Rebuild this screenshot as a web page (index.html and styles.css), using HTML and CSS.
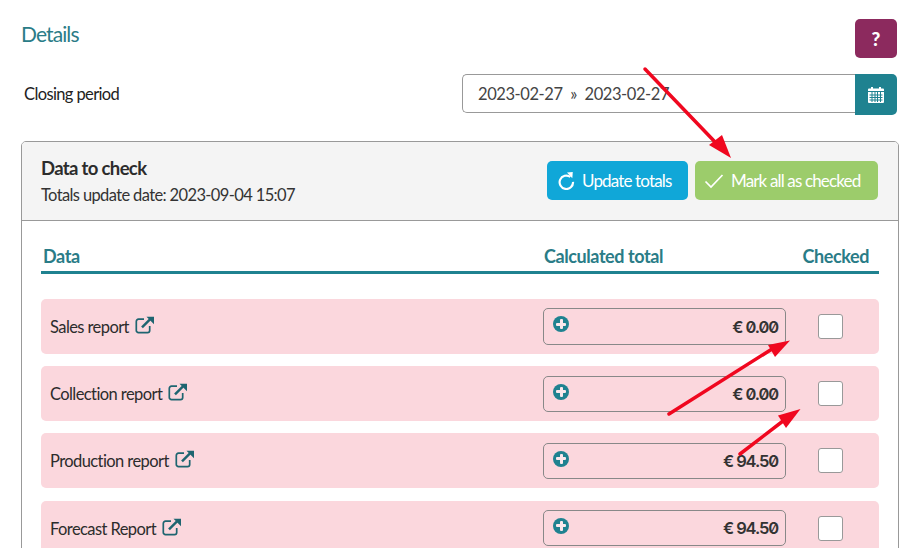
FILE: index.html
```html
<!DOCTYPE html>
<html lang="en">
<head>
<meta charset="utf-8">
<title>Details</title>
<link rel="stylesheet" href="styles.css">
</head>
<body>
<div class="page">
  <header class="top">
    <h1 class="title">Details</h1>
    <button class="help" type="button">?</button>
  </header>
  <div class="period">
    <span class="period-label">Closing period</span>
    <div class="date-group">
      <div class="date-input">2023-02-27 &nbsp;»&nbsp; 2023-02-27</div>
      <button class="date-btn" type="button" aria-label="Calendar">
        <svg width="18" height="18" viewBox="0 0 18 18"><path fill="#fff" d="M1 3.500a1 1 0 0 1 1-1h2V1h2v1.500h6V1h2v1.500h2a1 1 0 0 1 1 1V16a1 1 0 0 1-1 1H2a1 1 0 0 1-1-1z"/><path stroke="#1f8290" stroke-width="1" d="M1 5.500h16M2.500 9h13M2.500 11.500h13M2.500 14h13M5 6v10M8 6v10M10.500 6v10M13.500 6v10" fill="none"/></svg>
      </button>
    </div>
  </div>
  <section class="card">
    <div class="card-head">
      <div class="card-info">
        <div class="card-title">Data to check</div>
        <div class="card-sub">Totals update date: 2023-09-04 15:07</div>
      </div>
      <div class="actions">
        <button class="btn btn-blue" type="button">
          <svg width="17" height="19" viewBox="0 0 19 21" fill="none" stroke="#fff" stroke-width="2.400"><path d="M13.800 6.500A7.500 7.500 0 1 0 16.800 12"/><path fill="#fff" stroke="none" d="M10 1.500l6.500-.5-.5 7z"/></svg>
          Update totals
        </button>
        <button class="btn btn-green" type="button">
          <svg width="20" height="16" viewBox="0 0 20 16" fill="none" stroke="#fff" stroke-width="1.700"><path d="M1.500 8.500l5.500 5.500L18.500 2"/></svg>
          Mark all as checked
        </button>
      </div>
    </div>
    <div class="card-body">
      <div class="cols">
        <span class="col-data">Data</span>
        <span class="col-total">Calculated total</span>
        <span class="col-check">Checked</span>
      </div>
      <div class="row">
        <span class="row-name">Sales report <svg class="ext" viewBox="0 0 20 18"><path d="M9 3.200H3.500a2.200 2.200 0 0 0-2.200 2.200v9a2.200 2.200 0 0 0 2.200 2.200h9a2.200 2.200 0 0 0 2.200-2.200V10" fill="none" stroke="#1e6570" stroke-width="1.700"/><path d="M7 11.300L15 3.300" stroke="#1e6570" stroke-width="2.400" fill="none"/><path d="M11.500 .7h7.500v7.500z" fill="#1e6570"/></svg></span>
        <div class="total"><span class="plus"></span><span class="amount">€ 0.00</span></div>
        <span class="check"></span>
      </div>
      <div class="row">
        <span class="row-name">Collection report <svg class="ext" viewBox="0 0 20 18"><path d="M9 3.200H3.500a2.200 2.200 0 0 0-2.200 2.200v9a2.200 2.200 0 0 0 2.200 2.200h9a2.200 2.200 0 0 0 2.200-2.200V10" fill="none" stroke="#1e6570" stroke-width="1.700"/><path d="M7 11.300L15 3.300" stroke="#1e6570" stroke-width="2.400" fill="none"/><path d="M11.500 .7h7.500v7.500z" fill="#1e6570"/></svg></span>
        <div class="total"><span class="plus"></span><span class="amount">€ 0.00</span></div>
        <span class="check"></span>
      </div>
      <div class="row">
        <span class="row-name">Production report <svg class="ext" viewBox="0 0 20 18"><path d="M9 3.200H3.500a2.200 2.200 0 0 0-2.200 2.200v9a2.200 2.200 0 0 0 2.200 2.200h9a2.200 2.200 0 0 0 2.200-2.200V10" fill="none" stroke="#1e6570" stroke-width="1.700"/><path d="M7 11.300L15 3.300" stroke="#1e6570" stroke-width="2.400" fill="none"/><path d="M11.500 .7h7.500v7.500z" fill="#1e6570"/></svg></span>
        <div class="total"><span class="plus"></span><span class="amount">€ 94.50</span></div>
        <span class="check"></span>
      </div>
      <div class="row">
        <span class="row-name">Forecast Report <svg class="ext" viewBox="0 0 20 18"><path d="M9 3.200H3.500a2.200 2.200 0 0 0-2.200 2.200v9a2.200 2.200 0 0 0 2.200 2.200h9a2.200 2.200 0 0 0 2.200-2.200V10" fill="none" stroke="#1e6570" stroke-width="1.700"/><path d="M7 11.300L15 3.300" stroke="#1e6570" stroke-width="2.400" fill="none"/><path d="M11.500 .7h7.500v7.500z" fill="#1e6570"/></svg></span>
        <div class="total"><span class="plus"></span><span class="amount">€ 94.50</span></div>
        <span class="check"></span>
      </div>
    </div>
  </section>
  <svg class="arrows" width="916" height="548" viewBox="0 0 916 548">
    <g stroke="#f0071f" stroke-width="3.500" fill="#f0071f" stroke-linecap="round">
      <path d="M645 69L716 143" fill="none"/>
      <path stroke="none" d="M731 158L709 145 722 135z"/>
      <path d="M669 414L772 349" fill="none"/>
      <path stroke="none" d="M790 340.500L775 357 768 345z"/>
      <path d="M740 454L783 421" fill="none"/>
      <path stroke="none" d="M800.500 409L786 428 778 415.500z"/>
    </g>
  </svg>
</div>
</body>
</html>
```
FILE: styles.css
```css
* { box-sizing: border-box; }
html, body { margin: 0; padding: 0; background: #fff; }
body { width: 916px; height: 548px; overflow: hidden; font-family: "Lato", "Liberation Sans", sans-serif; font-size: 16px; color: #333; }
button { font-family: inherit; border: 0; margin: 0; }
.page { position: relative; width: 916px; height: 548px; overflow: hidden; padding: 19px 19px 0 21px; }
.top { display: flex; justify-content: space-between; align-items: flex-start; height: 39px; }
.title { margin: 3px 0 0; font-size: 21px; line-height: 24px; font-weight: 400; color: #2a7c87; letter-spacing: -0.9px; }
.help { width: 42px; height: 39px; border-radius: 5px; background: #8c2a5e; color: #fff; font-weight: 900; font-size: 19px; padding: 0; }
.period { display: flex; justify-content: space-between; align-items: flex-start; margin-top: 16px; height: 41px; }
.period-label { margin: 10px 0 0 3px; font-size: 16.500px; letter-spacing: -0.62px; color: #222; }
.date-group { display: flex; width: 435px; height: 41px; }
.date-input { flex: 1; height: 39px; border: 1px solid #999; border-right: 0; border-radius: 5px 0 0 5px; padding-left: 15px; line-height: 39px; font-size: 16.500px; color: #444; letter-spacing: -0.42px; }
.date-btn { width: 42px; height: 41px; border-radius: 0 5px 5px 0; background: #1f8290; padding: 0; display: flex; align-items: center; justify-content: center; }
.card { margin-top: 26px; width: 878px; height: 500px; border: 1px solid #999; border-radius: 5px 5px 0 0; }
.card-head { display: flex; justify-content: space-between; height: 79px; background: #f4f4f4; border-bottom: 1px solid #999; padding: 0 20px 0 19px; border-radius: 4px 4px 0 0; }
.card-title { margin-top: 14px; font-size: 18.500px; line-height: 24px; font-weight: 700; letter-spacing: -0.65px; color: #2c2c2c; }
.card-sub { margin-top: 4px; font-size: 16.500px; line-height: 22px; letter-spacing: -0.63px; color: #333; }
.actions { display: flex; gap: 7px; padding-top: 19px; }
.btn { height: 39px; border-radius: 5px; color: #fff; font-size: 17px; letter-spacing: -0.85px; display: flex; align-items: center; gap: 7px; padding: 0 13px 0 11px; white-space: nowrap; }
.btn-blue { width: 141px; background: #10a7d8; }
.btn-green { width: 183px; background: #9ccc6b; padding-left: 9px; }
.card-body { padding: 0 19px; }
.cols { display: flex; align-items: flex-end; height: 53px; border-bottom: 3px solid #1f8290; padding: 0 10px 3px 2px; color: #2a7c87; font-weight: 700; font-size: 18px; line-height: 24px; letter-spacing: -0.42px; }
.col-data { width: 501px; }
.col-total { flex: 1; }
.row { display: flex; align-items: center; height: 55px; margin-top: 12.200px; background: #fbd7dd; border-radius: 5px; padding: 0 36px 0 9px; }
.cols + .row { margin-top: 25px; }
.row-name { width: 493px; padding-top: 1px; font-size: 16.500px; letter-spacing: -0.58px; color: #2c2c2c; display: flex; align-items: center; gap: 6px; }
.ext { width: 20px; height: 18px; margin-top: -4px; }
.total { position: relative; width: 243px; height: 36.200px; border: 1px solid #888; border-radius: 5px; display: flex; justify-content: flex-end; align-items: center; padding-right: 7px; }
.plus { position: absolute; left: 9px; top: 7px; width: 16px; height: 16px; border-radius: 50%; background: #1f8290; }
.plus::before, .plus::after { content: ""; position: absolute; background: #fbe8ec; border-radius: 1px; }
.plus::before { left: 3px; top: 6.500px; width: 10px; height: 3px; }
.plus::after { left: 6.500px; top: 3px; width: 3px; height: 10px; }
.amount { font-family: "Inter", "Liberation Sans", sans-serif; font-feature-settings: "zero"; font-size: 16.500px; font-weight: 600; letter-spacing: -1.1px; color: #333; }
.check { width: 25px; height: 25px; margin-left: 32px; background: #fff; border: 1px solid #999; border-radius: 3px; }
.arrows { position: absolute; left: 0; top: 0; pointer-events: none; }
```
